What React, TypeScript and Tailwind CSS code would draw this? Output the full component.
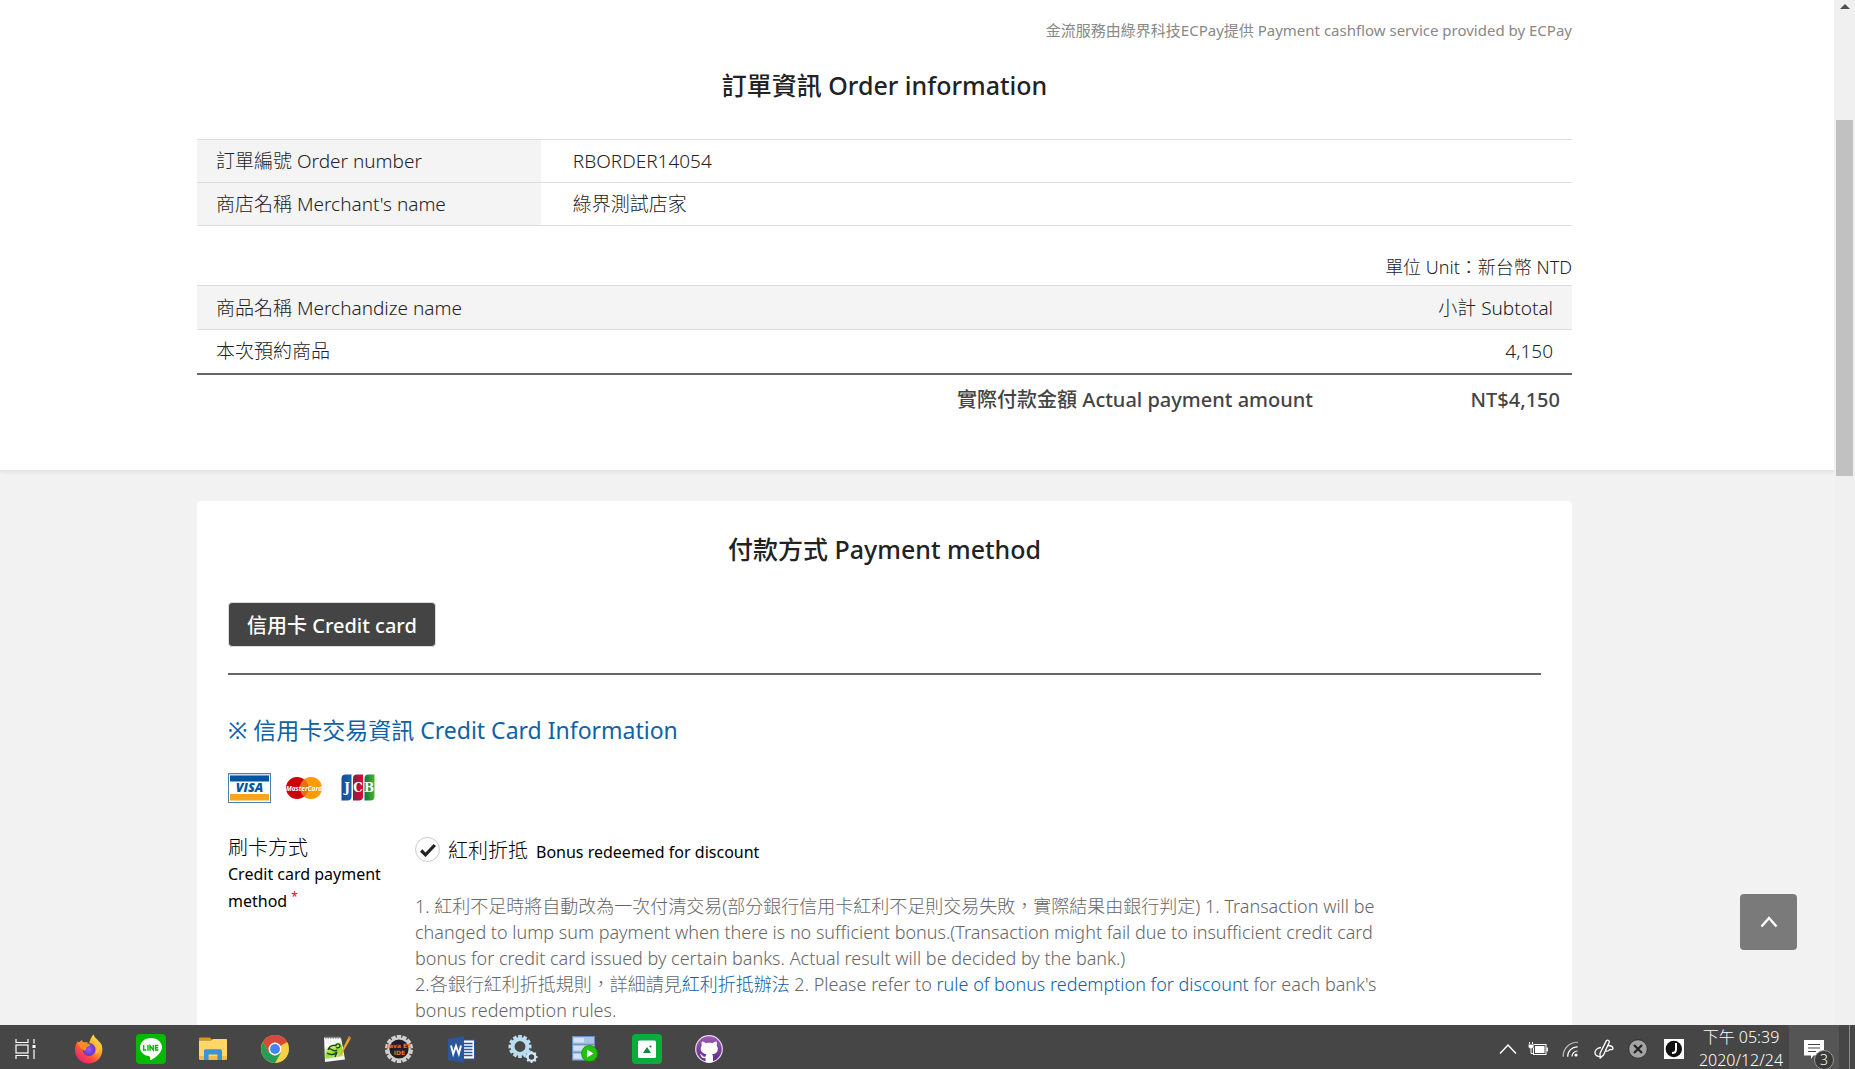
import type { ReactNode } from 'react';

const orderRows = [
  { label: '訂單編號 Order number', value: 'RBORDER14054' },
  { label: "商店名稱 Merchant's name", value: '綠界測試店家' },
];

function VisaLogo() {
  return (
    <svg viewBox="0 0 43 30" className="h-[30px] w-[43px]" role="img" aria-label="VISA">
      <rect x="0.5" y="0.5" width="42" height="29" fill="#fff" stroke="#4f81b0" />
      <rect x="1" y="1" width="41" height="1.6" fill="#c8d9e8" />
      <rect x="2" y="2.5" width="39" height="6" fill="#00579f" />
      <rect x="2" y="21" width="39" height="6.5" fill="#f9a61a" />
      <text x="21.5" y="19" textAnchor="middle" fontFamily="Open Sans" fontWeight="800" fontStyle="italic" fontSize="12.5" fill="#00579f">VISA</text>
    </svg>
  );
}

function MasterCardLogo() {
  return (
    <svg viewBox="0 0 38 24" className="h-6 w-[38px]" role="img" aria-label="MasterCard">
      <circle cx="26" cy="12" r="11" fill="#ff9b00" />
      <circle cx="12" cy="12" r="11" fill="#cc0007" />
      <path d="M19 3.500a11 11 0 0 1 0 17a11 11 0 0 1 0-17z" fill="#e5701a" />
      <text x="19" y="14.500" textAnchor="middle" fontFamily="Open Sans" fontWeight="700" fontStyle="italic" fontSize="6.500" fill="#fff">MasterCard</text>
    </svg>
  );
}

function JcbLogo() {
  return (
    <svg viewBox="0 0 34 27" className="h-[27px] w-[34px]" role="img" aria-label="JCB">
      <defs>
        <linearGradient id="jcbBlue"><stop offset="0" stopColor="#1c4a9c" /><stop offset="1" stopColor="#0a67b5" /></linearGradient>
        <linearGradient id="jcbRed"><stop offset="0" stopColor="#7d2244" /><stop offset="1" stopColor="#dd0a34" /></linearGradient>
        <linearGradient id="jcbGreen"><stop offset="0" stopColor="#087a3c" /><stop offset="1" stopColor="#52b030" /></linearGradient>
      </defs>
      <path d="M4.500 .5H10.500V22.500a4 4 0 0 1-4 4H.5V4.500a4 4 0 0 1 4-4z" fill="url(#jcbBlue)" />
      <path d="M16 .5H22V22.500a4 4 0 0 1-4 4H12V4.500a4 4 0 0 1 4-4z" fill="url(#jcbRed)" />
      <path d="M27.500 .5H33.500V22.500a4 4 0 0 1-4 4H23.500V4.500a4 4 0 0 1 4-4z" fill="url(#jcbGreen)" />
      <g fontFamily="DejaVu Serif" fontWeight="700" fontSize="12" fill="#fff" textAnchor="middle">
        <text x="6" y="18">J</text>
        <text x="17" y="18">C</text>
        <text x="28" y="18">B</text>
      </g>
    </svg>
  );
}

function TaskViewIcon() {
  return (
    <svg viewBox="0 0 21 20" className="h-5 w-[21px]" fill="none" stroke="#fff" strokeWidth="1.2">
      <path d="M1 0V3.500H13V0M1 20V16.500H13V20" />
      <rect x="1" y="6" width="12" height="8" />
      <path d="M19 0V4.500M19 10.500V20" />
      <rect x="17.500" y="6" width="3" height="3" fill="#fff" stroke="none" />
    </svg>
  );
}

function FirefoxIcon() {
  return (
    <svg viewBox="0 0 30 30" className="size-[30px]">
      <defs>
        <linearGradient id="ffBody" x1="0.85" y1="0.1" x2="0.2" y2="0.95">
          <stop offset="0" stopColor="#ffe14a" /><stop offset="0.4" stopColor="#ff9a2e" />
          <stop offset="0.7" stopColor="#ff4a3d" /><stop offset="1" stopColor="#e4207c" />
        </linearGradient>
        <radialGradient id="ffGlobe"><stop offset="0" stopColor="#9a5bff" /><stop offset="1" stopColor="#5a36c8" /></radialGradient>
      </defs>
      <path d="M19.500 0.500c1 3 3 4 5 6.500c1.500 1 3 3 3.500 5c2 9-4 17.500-13 17.500C7 29.500 1 23.500 1 16c0-3.500 1-7 3-9c0 1 .5 1.500 1 2c1-2 3-3 3-3c0 1 1 2 2.500 2.500c2.500-.5 4 .5 4.500 1c1-3 2-6.500 4.500-9z" fill="url(#ffBody)" />
      <circle cx="15" cy="15.500" r="6.500" fill="url(#ffGlobe)" />
      <path d="M4 8c3 0 6 .5 8 1.500c2 0 4 .5 4.500 1.500c-1 1.500-3 1-4 2.500c-1 2 0 3.500-2.500 3C7 15.500 5 12 4 8z" fill="#ff8a2a" />
      <path d="M19 6c4 4 5 9 2 14c4-1 6-5 5-10c-1-2-4-3-7-4z" fill="#ffc23a" />
    </svg>
  );
}

function LineIcon() {
  return (
    <svg viewBox="0 0 30 30" className="size-[30px]">
      <rect width="30" height="30" rx="4" fill="#00b900" />
      <path d="M15 4C8.500 4 4 8.300 4 13.300c0 4.500 3.800 8.200 9.200 9c1.300.3 1 1.300.8 3.200c0 .5.300.8 1 .5C19 24 26 19 26 13.300C26 8.300 21.500 4 15 4z" fill="#fff" />
      <g fill="none" stroke="#00b900" strokeWidth="1.400">
        <path d="M7.700 11v5h2.600M12 11v5.700M14 16.700v-5l3.300 4.300v-5M22.300 11.500h-2.800v4.500h2.800M19.500 13.800h2.600" />
      </g>
    </svg>
  );
}

function ExplorerIcon() {
  return (
    <svg viewBox="0 0 28 24" className="h-6 w-7">
      <path d="M0 1.500C0 .7.500.5 1 .5H11l2.500 3H0z" fill="#d99a15" />
      <path d="M0 3.500H12L14 2H27c.6 0 1 .4 1 1V21.500c0 .8-.4 1.200-1 1.200H1c-.6 0-1-.4-1-1.200z" fill="#ffd766" />
      <path d="M0 19h28v2.500c0 .8-.4 1.200-1 1.200H1c-.6 0-1-.4-1-1.200z" fill="#f3bd45" />
      <path d="M5 23V14c0-1 .7-1.700 1.700-1.700H21.300c1 0 1.700.7 1.700 1.700V23H18.500V17.500h-9V23z" fill="#3b92d6" />
    </svg>
  );
}

function ChromeIcon() {
  return (
    <svg viewBox="0 0 28 28" className="size-7">
      <circle cx="14" cy="14" r="14" fill="#f9cf4a" />
      <path d="M14 14L1.900 7A14 14 0 0 1 26.100 7z" fill="#d9493a" />
      <path d="M14 7H26.100A14 14 0 0 0 1.900 7L8 17.500z" fill="#d9493a" />
      <path d="M1.900 7A14 14 0 0 0 14 28L20 17.500L14 20.500L8 17.500z" fill="#269c57" />
      <circle cx="14" cy="14" r="6.400" fill="#fff" />
      <circle cx="14" cy="14" r="5" fill="#4484f0" />
    </svg>
  );
}

function NotepadIcon() {
  return (
    <svg viewBox="0 0 28 28" className="size-7">
      <defs><linearGradient id="npGreen" x1="0" y1="0" x2="0.6" y2="1"><stop offset="0.2" stopColor="#fff" /><stop offset="0.6" stopColor="#8fe01c" /><stop offset="1" stopColor="#b9e88a" /></linearGradient></defs>
      <path d="M1 2.500H18l4 22L2 27z" fill="#f4f4f4" />
      <path d="M2 8L18 7l2.500 14L2.500 24z" fill="url(#npGreen)" />
      <path d="M2 2.500h16" stroke="#777" strokeWidth="2" strokeDasharray="1.500 1" />
      <path d="M5 15c1-3 4-5 8-4.500c0-2 4-2.500 4 .5c0 2-3 2-4 1.500M4 18c3 2 7 2 10-1M6 14c3-1 5 4 8 1M12 22l2-5" fill="none" stroke="#1e3a1a" strokeWidth="1.300" />
      <path d="M26 1L17 19l-1.500 3l3-2.200L28 3z" fill="#f0a51e" />
      <path d="M26 1l2 2l-1 1.500l-2-1.500z" fill="#d96a50" />
    </svg>
  );
}

function GearShape({ cx, cy, r, teeth, fill, width }: { cx: number; cy: number; r: number; teeth: number; fill: string; width: number }) {
  const step = 360 / teeth;
  return (
    <g>
      {Array.from({ length: teeth }, (_, i) => (
        <rect key={i} x={cx - r * 0.16} y={cy - r} width={r * 0.32} height={r * 0.4} fill={fill} transform={`rotate(${i * step} ${cx} ${cy})`} />
      ))}
      <circle cx={cx} cy={cy} r={r * 0.82 - width / 2} fill="none" stroke={fill} strokeWidth={width} />
    </g>
  );
}

function JavaIdeIcon() {
  return (
    <svg viewBox="0 0 28 28" className="size-7">
      <GearShape cx={14} cy={14} r={14} teeth={14} fill="#d0cfcc" width={2} />
      <circle cx="14" cy="14" r="9.600" fill="#231c2c" />
      <g fontFamily="DejaVu Sans" fontWeight="700" fill="#e07820" textAnchor="middle">
        <text x="14" y="13" fontSize="6">Java EE</text>
        <text x="14.500" y="19.500" fontSize="6">IDE</text>
      </g>
    </svg>
  );
}

function WordIcon() {
  return (
    <svg viewBox="0 0 27 27" className="size-[27px]">
      <rect x="14" y="4" width="12.500" height="19" fill="#fff" stroke="#2b579a" strokeWidth="1" />
      <path d="M16 7.500h8.500M16 10.500h8.500M16 13.500h8.500M16 16.500h8.500M16 19.500h8.500" stroke="#2b579a" strokeWidth="1.400" />
      <path d="M0 3L16 0V27L0 24z" fill="#2b579a" />
      <path d="M3 9.500L5.200 18L8 10L10.800 18L13 9.500" fill="none" stroke="#fff" strokeWidth="1.900" />
    </svg>
  );
}

function GearsIcon() {
  return (
    <svg viewBox="0 0 30 28" className="h-7 w-[30px]">
      <GearShape cx={12} cy={11.5} r={11.5} teeth={12} fill="#b9dcef" width={4} />
      <GearShape cx={23.5} cy={22} r={6} teeth={8} fill="#cfe8f6" width={2.2} />
    </svg>
  );
}

function ServerIcon() {
  return (
    <svg viewBox="0 0 26 26" className="size-[26px]">
      <g fill="#a9c3e6" stroke="#6d93c8" strokeWidth="0.800">
        <rect x="0.500" y="0.500" width="22" height="7.600" />
        <rect x="0.500" y="8.500" width="22" height="7.600" />
        <rect x="0.500" y="16.500" width="22" height="7.600" />
      </g>
      <path d="M1.500 2H12v4.500H1.500zM1.500 10H12v4.500H1.500zM1.500 18H10v4.500H1.500z" fill="#d4e2f5" />
      <circle cx="17.500" cy="17.500" r="8" fill="#21c40c" stroke="#158a08" strokeWidth="0.800" />
      <path d="M15 13.500l6.500 4l-6.500 4z" fill="#fff" />
    </svg>
  );
}

function CaptureIcon() {
  return (
    <svg viewBox="0 0 30 30" className="size-[30px]">
      <rect width="30" height="30" rx="4" fill="#0aad3c" />
      <rect x="6" y="6.500" width="18" height="17.500" rx="1.500" fill="#fff" />
      <path d="M11 19l4-6l4 6z" fill="#0c8a36" />
      <circle cx="18.500" cy="12.500" r="1.100" fill="#0c8a36" />
    </svg>
  );
}

function GithubIcon() {
  return (
    <svg viewBox="0 0 28 28" className="size-7">
      <defs><linearGradient id="ghBg" x1="0" y1="0" x2="0" y2="1"><stop offset="0" stopColor="#a35cb5" /><stop offset="1" stopColor="#5b2a86" /></linearGradient></defs>
      <circle cx="14" cy="14" r="13.300" fill="url(#ghBg)" stroke="#e6d9ec" strokeWidth="1.200" />
      <path d="M7 6.500c1.500 0 3 1 4 1.700c2-.5 4.500-.5 6.500 0c1-.7 2.500-1.700 4-1.700c.5 1.500.5 2.800.2 4c2.500 4 .8 8.500-4.700 8.800c1 1 1 2 1 3.700V27c-2.500 1-5.500 1-7.500.3V23c-2.500.5-4-.5-4.500-2c-.4-1-1-1.300-1.500-1.700c2-.4 2.800 1 3.500 1.900c.8.8 1.700.7 2.500.4c.2-1 .5-1.700 1-2.300C6 18.500 4.500 14 6.800 10.500c-.4-1.500-.3-2.800.2-4z" fill="#fff" />
    </svg>
  );
}

const apps: { name: string; icon: ReactNode }[] = [
  { name: 'Firefox', icon: <FirefoxIcon /> },
  { name: 'LINE', icon: <LineIcon /> },
  { name: 'File Explorer', icon: <ExplorerIcon /> },
  { name: 'Chrome', icon: <ChromeIcon /> },
  { name: 'Notepad++', icon: <NotepadIcon /> },
  { name: 'Java EE IDE', icon: <JavaIdeIcon /> },
  { name: 'Word', icon: <WordIcon /> },
  { name: 'Services', icon: <GearsIcon /> },
  { name: 'Server', icon: <ServerIcon /> },
  { name: 'Capture', icon: <CaptureIcon /> },
  { name: 'GitHub', icon: <GithubIcon /> },
];

function Tray() {
  return (
    <div className="flex items-center">
      <button aria-label="Show hidden icons" className="flex w-[30px] justify-center">
        <svg viewBox="0 0 18 12" className="h-3 w-[18px]" fill="none" stroke="#fff" strokeWidth="1.500"><path d="M1 10.500L9 2l8 8.500" /></svg>
      </button>
      <button aria-label="Battery" className="flex w-[30px] justify-center">
        <svg viewBox="0 0 20 14" className="h-3.5 w-5" fill="none" stroke="#fff">
          <rect x="5.500" y="2.500" width="12.500" height="10" strokeWidth="1" />
          <rect x="7" y="4" width="9.500" height="7" fill="#fff" stroke="none" />
          <path d="M19.200 5.500v4" strokeWidth="1.400" />
          <path d="M1.500 0v2M4.500 0v2" strokeWidth="1" />
          <path d="M.3 2.200H5.700V4.500a2 2 0 0 1-2 2H2.300a2 2 0 0 1-2-2z" fill="#fff" stroke="#444" strokeWidth="0.500" />
          <path d="M3 6v5.500h2" strokeWidth="1" />
        </svg>
      </button>
      <button aria-label="Network" className="flex w-[34px] justify-center">
        <svg viewBox="0 0 17 17" className="size-[17px]" fill="none" stroke="#fff" strokeWidth="1.200">
          <circle cx="14" cy="14" r="1.600" fill="#fff" stroke="none" />
          <path d="M10 15.500a5.500 5.500 0 0 1 5.500-5.500" />
          <path d="M5.700 15.800a9.500 9.500 0 0 1 10-10" />
          <path d="M1.200 15.800A14 14 0 0 1 16 1.300" stroke="#bbb" />
        </svg>
      </button>
      <button aria-label="Ink workspace" className="flex w-[34px] justify-center">
        <svg viewBox="0 0 20 20" className="size-5" fill="none" stroke="#fff" strokeWidth="1.300">
          <path d="M12.500 1.500c1.300-1 3.200.3 2.700 1.800L9.500 16l-3.300 3l-.2-4.500z" />
          <path d="M7 8.500C3 9 .8 11.500 1 14s3 4 6 3.500M11.500 12c2.500.5 4-.5 4.200-2M14 6.500c3 .2 5 1.500 5 3c0 1.200-1.500 1.300-3 .8" />
        </svg>
      </button>
      <button aria-label="Sync status" className="flex w-[34px] justify-center">
        <svg viewBox="0 0 20 20" className="size-5"><circle cx="10" cy="10" r="9.300" fill="#a3a3a3" stroke="#222" strokeWidth="0.800" /><path d="M6 6l8 8M14 6l-8 8" stroke="#222" strokeWidth="2.200" /></svg>
      </button>
      <button aria-label="Input method" className="flex w-[38px] justify-center">
        <svg viewBox="0 0 20 20" className="size-5"><rect width="20" height="20" fill="#fff" /><circle cx="9.800" cy="10" r="8.200" fill="#111" /><path d="M12 4v6.500c0 2.500-1.500 3.500-4 3.500" fill="none" stroke="#fff" strokeWidth="2" /></svg>
      </button>
    </div>
  );
}

function Taskbar() {
  return (
    <footer className="h-11 shrink-0 overflow-hidden bg-[#464646] text-white">
      <div className="flex h-12 items-center">
        <button aria-label="Task view" className="mr-2 flex w-[50px] justify-center"><TaskViewIcon /></button>
        <nav className="flex flex-1 items-center">
          {apps.map((app) => (
            <button key={app.name} aria-label={app.name} className="flex w-[62px] justify-center">{app.icon}</button>
          ))}
        </nav>
        <Tray />
        <div className="flex w-24 flex-col items-center text-base leading-[23px]">
          <span>下午 05:39</span>
          <span>2020/12/24</span>
        </div>
        <button aria-label="Notifications" className="flex h-full w-[50px] items-center justify-center bg-[#555]">
          <span className="relative">
            <svg viewBox="0 0 20 19" className="h-[19px] w-5">
              <path d="M0 0H20V15.500H9.500L7 19V15.500H0z" fill="#fff" />
              <path d="M4 4.500h12M4 8h12M4 11.500h8" stroke="#444" strokeWidth="1.200" />
            </svg>
            <span className="absolute top-2.5 left-2.5 flex size-5 items-center justify-center rounded-full border border-[#999] bg-[#3a3a3a] text-sm leading-none">3</span>
          </span>
        </button>
        <div className="ml-2.5 h-full w-1.5 border-l border-[#8a8a8a]" />
      </div>
    </footer>
  );
}

function OrderInformation() {
  return (
    <section className="border-b border-[#e6e6e6] bg-white pt-[17px] pr-[262px] pb-[57px] pl-[197px] shadow-[0_1px_4px_rgba(0,0,0,0.08)]">
      <p className="text-right text-[15px] leading-[26px] font-normal text-[#888]">
        金流服務由綠界科技ECPay提供 Payment cashflow service provided by ECPay
      </p>
      <h2 className="mt-[26px] text-center text-[25px] leading-8 font-medium text-[#222]">訂單資訊 Order information</h2>

      <table className="mt-[38px] w-full border-b border-[#ddd] text-[19px] leading-[26px] text-[#222]">
        <tbody>
          {orderRows.map((row) => (
            <tr key={row.label} className="h-[43px] border-t border-[#ddd]">
              <th scope="row" className="w-1/4 bg-[#f4f4f4] pl-[19px] text-left font-light">{row.label}</th>
              <td className="pl-8">{row.value}</td>
            </tr>
          ))}
        </tbody>
      </table>

      <p className="mt-7 text-right text-lg leading-[26px] text-[#222]">單位 Unit：新台幣 NTD</p>
      <table className="mt-[5px] w-full border-b-2 border-[#666] text-[19px] leading-[26px] text-[#222]">
        <thead>
          <tr className="h-11 border-y border-[#ddd] bg-[#f4f4f4]">
            <th scope="col" className="pl-[19px] text-left font-light">商品名稱 Merchandize name</th>
            <th scope="col" className="pr-[19px] text-right font-light">小計 Subtotal</th>
          </tr>
        </thead>
        <tbody>
          <tr className="h-11">
            <td className="pl-[19px]">本次預約商品</td>
            <td className="pr-[19px] text-right">4,150</td>
          </tr>
        </tbody>
      </table>
      <div className="flex justify-end pt-3 pr-3 text-xl leading-[26px] font-medium text-[#444]">
        <span>實際付款金額 Actual payment amount</span>
        <span className="w-[247px] text-right">NT$4,150</span>
      </div>
    </section>
  );
}

function PaymentMethod() {
  return (
    <section className="mt-[30px] mr-[262px] ml-[197px] flex-1 rounded-t bg-white px-[31px] pt-8">
      <h2 className="text-center text-[25px] leading-8 font-medium text-[#222]">付款方式 Payment method</h2>
      <div className="mt-[37px] border-b-2 border-[#666] pb-[26px]">
        <button className="block h-[45px] rounded border border-[#ddd] bg-[#444] px-[18px] pt-1 text-xl leading-[26px] font-medium text-white">
          信用卡 Credit card
        </button>
      </div>
      <h3 className="mt-10 text-[23px] leading-[30px] font-normal text-[#0e62a8]">※ 信用卡交易資訊 Credit Card Information</h3>
      <div className="mt-7 flex items-center gap-3.5">
        <VisaLogo />
        <MasterCardLogo />
        <span className="pl-1"><JcbLogo /></span>
      </div>

      <div className="mt-8 flex text-black">
        <div className="w-[187px] pr-5 text-base leading-[27px] font-normal">
          <div className="text-xl leading-[26px] font-light">刷卡方式</div>
          Credit card payment method<sup className="pl-1 leading-none text-red-600">*</sup>
        </div>
        <div className="max-w-[980px] flex-1">
          <div className="flex h-[30px] items-center">
            <span className="relative flex size-[25px] items-center justify-center">
              <input id="bonus" type="checkbox" defaultChecked className="size-[25px] appearance-none rounded-full border border-[#ccc] bg-white" />
              <svg viewBox="0 0 16 14" className="pointer-events-none absolute h-3.5 w-4" fill="none" stroke="#222" strokeWidth="3.200"><path d="M1.200 7.500L5.500 11.800L14.800 2" /></svg>
            </span>
            <label htmlFor="bonus" className="flex items-baseline gap-2 pt-1 pl-2 text-xl leading-[26px]">
              紅利折抵 <span className="text-base leading-[26px] font-normal">Bonus redeemed for discount</span>
            </label>
          </div>
          <p className="mt-7 text-lg leading-[26px] text-[#666]">
            1. 紅利不足時將自動改為一次付清交易(部分銀行信用卡紅利不足則交易失敗，實際結果由銀行判定) 1. Transaction will be changed to lump sum payment when
            there is no sufficient bonus.(Transaction might fail due to insufficient credit card bonus for credit card issued by certain banks. Actual result
            will be decided by the bank.)
            <br />
            2.各銀行紅利折抵規則，詳細請見<a href="#rules" className="text-[#0e62a8]">紅利折抵辦法</a> 2. Please refer to{' '}
            <a href="#rules" className="text-[#0e62a8]">rule of bonus redemption for discount</a> for each bank's bonus redemption rules.
          </p>
        </div>
      </div>
    </section>
  );
}

function Scrollbar() {
  return (
    <div className="flex w-[21px] shrink-0 flex-col items-center bg-[#f0f0f0]">
      <div className="flex h-[120px] items-start pt-1">
        <svg viewBox="0 0 10 5" className="h-[5px] w-2.5"><path d="M5 0L10 5H0z" fill="#505050" /></svg>
      </div>
      <div className="h-[356px] w-[17px] bg-[#c1c1c1]" />
    </div>
  );
}

export default function App() {
  return (
    <div className="flex h-screen flex-col overflow-hidden bg-[#f2f2f2] font-['Noto_Sans','Noto_Sans_CJK_TC',sans-serif] font-light text-[#333]" lang="zh-Hant">
      <div className="flex min-h-0 flex-1">
        <main className="relative flex min-w-0 flex-1 flex-col overflow-hidden">
          <OrderInformation />
          <PaymentMethod />
          <button aria-label="Back to top" className="absolute right-[37px] bottom-[75px] flex h-14 w-[57px] items-center justify-center rounded-sm bg-[#7a7a7a]">
            <svg viewBox="0 0 18 12" className="h-3 w-[18px]" fill="none" stroke="#fff" strokeWidth="2.400"><path d="M1.500 10.500L9 2l7.500 8.500" /></svg>
          </button>
        </main>
        <Scrollbar />
      </div>
      <Taskbar />
    </div>
  );
}
